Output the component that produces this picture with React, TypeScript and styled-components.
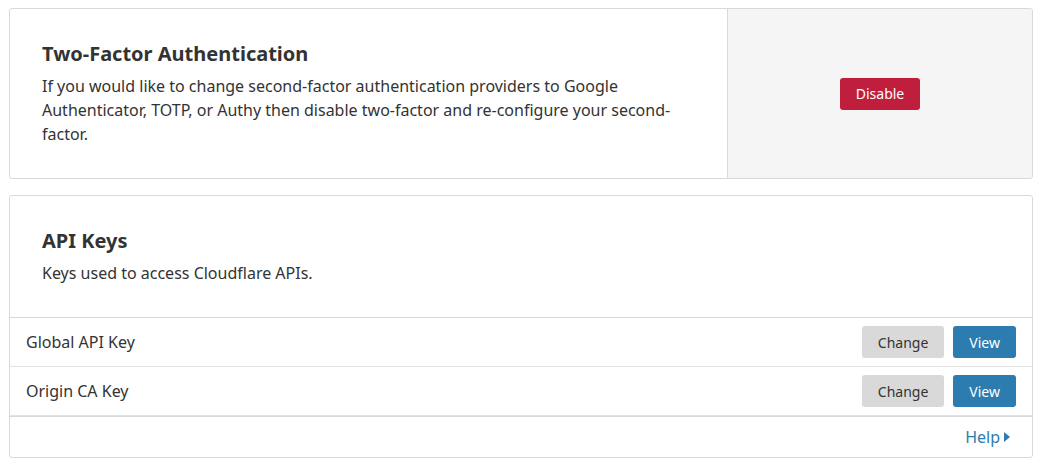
import styled, { createGlobalStyle } from "styled-components";

const GlobalStyle = createGlobalStyle`
  body {
    margin: 0;
    background: #fff;
    font-family: "Noto Sans", "Open Sans", sans-serif;
    color: #333;
  }
  * { box-sizing: border-box; }
`;

interface ApiKey {
  name: string;
}

const keys: ApiKey[] = [{ name: "Global API Key" }, { name: "Origin CA Key" }];

export default function App(): JSX.Element {
  return (
    <Page>
      <GlobalStyle />
      <Card>
        <SplitBody>
          <Section>
            <Title>Two-Factor Authentication</Title>
            <Description>
              If you would like to change second-factor authentication providers to Google
              Authenticator, TOTP, or Authy then disable two-factor and re-configure your second-factor.
            </Description>
          </Section>
          <Aside>
            <Button $variant="danger">Disable</Button>
          </Aside>
        </SplitBody>
      </Card>

      <Card>
        <Section>
          <Title>API Keys</Title>
          <Description>Keys used to access Cloudflare APIs.</Description>
        </Section>
        <KeyList>
          {keys.map((k) => (
            <KeyRow key={k.name}>
              <KeyName>{k.name}</KeyName>
              <Actions>
                <Button $variant="default">Change</Button>
                <Button $variant="primary">View</Button>
              </Actions>
            </KeyRow>
          ))}
        </KeyList>
        <Footer>
          <HelpLink href="#">
            Help
            <Caret viewBox="0 0 6 10">
              <path d="M0 0 L6 5 L0 10 Z" fill="currentColor" />
            </Caret>
          </HelpLink>
        </Footer>
      </Card>
    </Page>
  );
}

const Page = styled.div`
  width: 1024px;
  margin: 8px 0 0 9px;
  display: flex;
  flex-direction: column;
  gap: 16px;
`;

const Card = styled.div`
  border: 1px solid #d9d9d9;
  border-radius: 3px;
  background: #fff;
  overflow: hidden;
`;

const SplitBody = styled.div`
  display: grid;
  grid-template-columns: 1fr 305px;
`;

const Section = styled.div`
  padding: 32px;
`;

const Aside = styled.div`
  background: #f5f5f5;
  border-left: 1px solid #d9d9d9;
  display: flex;
  align-items: center;
  justify-content: center;
`;

const Title = styled.h2`
  margin: 0 0 7px;
  font-size: 20px;
  line-height: 26px;
  font-weight: 700;
  color: #333;
`;

const Description = styled.p`
  margin: 0;
  font-size: 16px;
  line-height: 24px;
  color: #333;
`;

const variants = {
  danger: { bg: "#bf1e3c", fg: "#fff" },
  primary: { bg: "#2c7cb0", fg: "#fff" },
  default: { bg: "#d9d9d9", fg: "#333" },
};

const Button = styled.button<{ $variant: keyof typeof variants }>`
  height: 32px;
  padding: 0 16px;
  border: none;
  border-radius: 3px;
  font-family: inherit;
  font-size: 14px;
  background: ${(p) => variants[p.$variant].bg};
  color: ${(p) => variants[p.$variant].fg};
  cursor: pointer;
`;

const KeyList = styled.div`
  border-top: 1px solid #d9d9d9;
  border-bottom: 1px solid #d9d9d9;
`;

const KeyRow = styled.div`
  height: 49px;
  padding: 0 16px;
  display: flex;
  align-items: center;
  justify-content: space-between;
  border-bottom: 1px solid #e3e3e3;
`;

const KeyName = styled.span`
  font-size: 16px;
`;

const Actions = styled.div`
  display: flex;
  gap: 9px;
`;

const Footer = styled.div`
  height: 40px;
  padding: 0 22px 0 20px;
  display: flex;
  align-items: center;
  justify-content: flex-end;
`;

const HelpLink = styled.a`
  display: flex;
  align-items: center;
  gap: 4px;
  font-size: 16px;
  color: #2c7cb0;
  text-decoration: none;
`;

const Caret = styled.svg`
  width: 6px;
  height: 10px;
`;
